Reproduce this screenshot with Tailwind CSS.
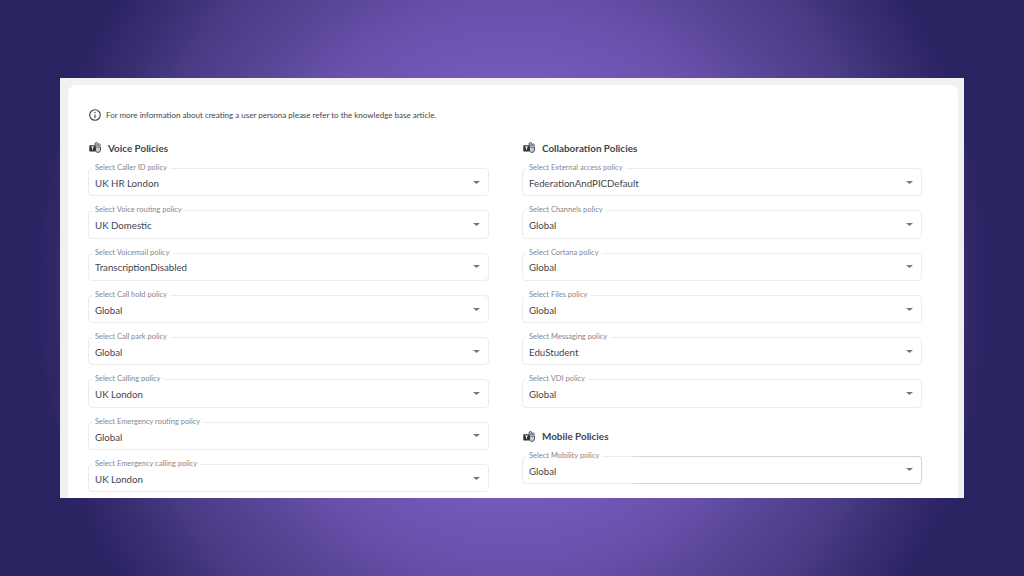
<!DOCTYPE html>
<html>
<head>
<meta charset="utf-8">
<script src="https://cdn.jsdelivr.net/npm/@tailwindcss/browser@4"></script>
</head>
<body class="m-0 overflow-hidden">
<div class="w-[1024px] h-[576px] pt-[78px] pl-[60px] font-['Lato','Noto_Sans',sans-serif] text-[#44444e] bg-[#2b2463] bg-[radial-gradient(ellipse_478px_516px_at_512px_288px,#7a5dc0_0%,#7559ba_40%,#6750aa_56%,#5a4799_65%,#4a3b85_80%,#3a2e72_90%,#2b2463_100%)]">
  <div class="w-[904px] h-[420px] bg-[#f1f1f1] pt-[7px] pl-2 pr-[6px] overflow-hidden">
    <div class="bg-white rounded-t-lg h-[420px] pl-5 pr-9 pt-[22px]">
      <div class="flex items-center gap-[5px] h-[16px] text-[8px] text-[#44444e]">
        <svg class="w-3 h-3 shrink-0 ml-px" viewBox="0 0 12 12" fill="none" stroke="#3c3c46" stroke-width="1.1"><circle cx="6" cy="6" r="5.3"/><path d="M6 5.4V9M6 3v1.2"/></svg>
        <span>For more information about creating a user persona please refer to the knowledge base article.</span>
      </div>
      <div class="grid grid-cols-[401px_400px] gap-x-[33px] mt-[17px]">
        <div>
          <h2 class="flex items-center gap-[7px] h-[16px] text-[9.9px] font-bold">
            <svg class="w-3 h-3 shrink-0 ml-px" viewBox="0 0 12 12"><circle cx="7.5" cy="2" r="1.5" fill="#c4c4c8" stroke="#4a4a54" stroke-width=".9"/><circle cx="10.4" cy="3" r="1.1" fill="#d4d4d8" stroke="#5c5c66" stroke-width=".8"/><path d="M6.4 5h5.1v3a2.6 2.6 0 0 1-2.6 2.5A2.7 2.7 0 0 1 6.4 8.4z" fill="#c8c8cc" stroke="#4a4a54" stroke-width=".9"/><rect x="0.3" y="3.2" width="6.4" height="6.2" rx=".6" fill="#2f2f38"/><path d="M1.9 4.9h3.2M3.5 4.9v3" stroke="#fff" stroke-width=".9"/></svg>
            Voice Policies
          </h2>
          <div class="flex flex-col gap-[14px] mt-[12px]">
            <div class="relative h-[28.3px] border border-[#ececee] rounded flex items-center justify-between pl-[6px] pr-2 text-[9.7px]"><span class="absolute -top-[6px] left-[3px] bg-white px-[3px] text-[7.5px] leading-[9px] text-[#85858f]">Select Caller ID policy</span><span class="pt-[2px]">UK HR London</span><svg class="w-[7px] h-[3px]" viewBox="0 0 7 3"><path d="M0 0h7L3.5 3z" fill="#75757e"/></svg></div>
            <div class="relative h-[28.3px] border border-[#ececee] rounded flex items-center justify-between pl-[6px] pr-2 text-[9.7px]"><span class="absolute -top-[6px] left-[3px] bg-white px-[3px] text-[7.5px] leading-[9px] text-[#85858f]">Select Voice routing policy</span><span class="pt-[2px]">UK Domestic</span><svg class="w-[7px] h-[3px]" viewBox="0 0 7 3"><path d="M0 0h7L3.5 3z" fill="#75757e"/></svg></div>
            <div class="relative h-[28.3px] border border-[#ececee] rounded flex items-center justify-between pl-[6px] pr-2 text-[9.7px]"><span class="absolute -top-[6px] left-[3px] bg-white px-[3px] text-[7.5px] leading-[9px] text-[#85858f]">Select Voicemail policy</span><span class="pt-[2px]">TranscriptionDisabled</span><svg class="w-[7px] h-[3px]" viewBox="0 0 7 3"><path d="M0 0h7L3.5 3z" fill="#75757e"/></svg></div>
            <div class="relative h-[28.3px] border border-[#ececee] rounded flex items-center justify-between pl-[6px] pr-2 text-[9.7px]"><span class="absolute -top-[6px] left-[3px] bg-white px-[3px] text-[7.5px] leading-[9px] text-[#85858f]">Select Call hold policy</span><span class="pt-[2px]">Global</span><svg class="w-[7px] h-[3px]" viewBox="0 0 7 3"><path d="M0 0h7L3.5 3z" fill="#75757e"/></svg></div>
            <div class="relative h-[28.3px] border border-[#ececee] rounded flex items-center justify-between pl-[6px] pr-2 text-[9.7px]"><span class="absolute -top-[6px] left-[3px] bg-white px-[3px] text-[7.5px] leading-[9px] text-[#85858f]">Select Call park policy</span><span class="pt-[2px]">Global</span><svg class="w-[7px] h-[3px]" viewBox="0 0 7 3"><path d="M0 0h7L3.5 3z" fill="#75757e"/></svg></div>
            <div class="relative h-[28.3px] border border-[#ececee] rounded flex items-center justify-between pl-[6px] pr-2 text-[9.7px]"><span class="absolute -top-[6px] left-[3px] bg-white px-[3px] text-[7.5px] leading-[9px] text-[#85858f]">Select Calling policy</span><span class="pt-[2px]">UK London</span><svg class="w-[7px] h-[3px]" viewBox="0 0 7 3"><path d="M0 0h7L3.5 3z" fill="#75757e"/></svg></div>
            <div class="relative h-[28.3px] border border-[#ececee] rounded flex items-center justify-between pl-[6px] pr-2 text-[9.7px]"><span class="absolute -top-[6px] left-[3px] bg-white px-[3px] text-[7.5px] leading-[9px] text-[#85858f]">Select Emergency routing policy</span><span class="pt-[2px]">Global</span><svg class="w-[7px] h-[3px]" viewBox="0 0 7 3"><path d="M0 0h7L3.5 3z" fill="#75757e"/></svg></div>
            <div class="relative h-[28.3px] border border-[#ececee] rounded flex items-center justify-between pl-[6px] pr-2 text-[9.7px]"><span class="absolute -top-[6px] left-[3px] bg-white px-[3px] text-[7.5px] leading-[9px] text-[#85858f]">Select Emergency calling policy</span><span class="pt-[2px]">UK London</span><svg class="w-[7px] h-[3px]" viewBox="0 0 7 3"><path d="M0 0h7L3.5 3z" fill="#75757e"/></svg></div>
          </div>
        </div>
        <div>
          <h2 class="flex items-center gap-[7px] h-[16px] text-[9.9px] font-bold">
            <svg class="w-3 h-3 shrink-0 ml-px" viewBox="0 0 12 12"><circle cx="7.5" cy="2" r="1.5" fill="#c4c4c8" stroke="#4a4a54" stroke-width=".9"/><circle cx="10.4" cy="3" r="1.1" fill="#d4d4d8" stroke="#5c5c66" stroke-width=".8"/><path d="M6.4 5h5.1v3a2.6 2.6 0 0 1-2.6 2.5A2.7 2.7 0 0 1 6.4 8.4z" fill="#c8c8cc" stroke="#4a4a54" stroke-width=".9"/><rect x="0.3" y="3.2" width="6.4" height="6.2" rx=".6" fill="#2f2f38"/><path d="M1.9 4.9h3.2M3.5 4.9v3" stroke="#fff" stroke-width=".9"/></svg>
            Collaboration Policies
          </h2>
          <div class="flex flex-col gap-[14px] mt-[12px]">
            <div class="relative h-[28.3px] border border-[#ececee] rounded flex items-center justify-between pl-[6px] pr-2 text-[9.7px]"><span class="absolute -top-[6px] left-[3px] bg-white px-[3px] text-[7.5px] leading-[9px] text-[#85858f]">Select External access policy</span><span class="pt-[2px]">FederationAndPICDefault</span><svg class="w-[7px] h-[3px]" viewBox="0 0 7 3"><path d="M0 0h7L3.5 3z" fill="#75757e"/></svg></div>
            <div class="relative h-[28.3px] border border-[#ececee] rounded flex items-center justify-between pl-[6px] pr-2 text-[9.7px]"><span class="absolute -top-[6px] left-[3px] bg-white px-[3px] text-[7.5px] leading-[9px] text-[#85858f]">Select Channels policy</span><span class="pt-[2px]">Global</span><svg class="w-[7px] h-[3px]" viewBox="0 0 7 3"><path d="M0 0h7L3.5 3z" fill="#75757e"/></svg></div>
            <div class="relative h-[28.3px] border border-[#ececee] rounded flex items-center justify-between pl-[6px] pr-2 text-[9.7px]"><span class="absolute -top-[6px] left-[3px] bg-white px-[3px] text-[7.5px] leading-[9px] text-[#85858f]">Select Cortana policy</span><span class="pt-[2px]">Global</span><svg class="w-[7px] h-[3px]" viewBox="0 0 7 3"><path d="M0 0h7L3.5 3z" fill="#75757e"/></svg></div>
            <div class="relative h-[28.3px] border border-[#ececee] rounded flex items-center justify-between pl-[6px] pr-2 text-[9.7px]"><span class="absolute -top-[6px] left-[3px] bg-white px-[3px] text-[7.5px] leading-[9px] text-[#85858f]">Select Files policy</span><span class="pt-[2px]">Global</span><svg class="w-[7px] h-[3px]" viewBox="0 0 7 3"><path d="M0 0h7L3.5 3z" fill="#75757e"/></svg></div>
            <div class="relative h-[28.3px] border border-[#ececee] rounded flex items-center justify-between pl-[6px] pr-2 text-[9.7px]"><span class="absolute -top-[6px] left-[3px] bg-white px-[3px] text-[7.5px] leading-[9px] text-[#85858f]">Select Messaging policy</span><span class="pt-[2px]">EduStudent</span><svg class="w-[7px] h-[3px]" viewBox="0 0 7 3"><path d="M0 0h7L3.5 3z" fill="#75757e"/></svg></div>
            <div class="relative h-[28.3px] border border-[#ececee] rounded flex items-center justify-between pl-[6px] pr-2 text-[9.7px]"><span class="absolute -top-[6px] left-[3px] bg-white px-[3px] text-[7.5px] leading-[9px] text-[#85858f]">Select VDI policy</span><span class="pt-[2px]">Global</span><svg class="w-[7px] h-[3px]" viewBox="0 0 7 3"><path d="M0 0h7L3.5 3z" fill="#75757e"/></svg></div>
          </div>
          <h2 class="flex items-center gap-[7px] h-[16px] mt-[21px] text-[9.9px] font-bold">
            <svg class="w-3 h-3 shrink-0 ml-px" viewBox="0 0 12 12"><circle cx="7.5" cy="2" r="1.5" fill="#c4c4c8" stroke="#4a4a54" stroke-width=".9"/><circle cx="10.4" cy="3" r="1.1" fill="#d4d4d8" stroke="#5c5c66" stroke-width=".8"/><path d="M6.4 5h5.1v3a2.6 2.6 0 0 1-2.6 2.5A2.7 2.7 0 0 1 6.4 8.4z" fill="#c8c8cc" stroke="#4a4a54" stroke-width=".9"/><rect x="0.3" y="3.2" width="6.4" height="6.2" rx=".6" fill="#2f2f38"/><path d="M1.9 4.9h3.2M3.5 4.9v3" stroke="#fff" stroke-width=".9"/></svg>
            Mobile Policies
          </h2>
          <div class="relative h-[28.3px] mt-[11px] border border-[#ececee] rounded flex items-center justify-between pl-[6px] pr-2 text-[9.7px]"><span class="absolute -top-px left-[110px] -bottom-px -right-px border border-l-0 border-[#d6d6da] rounded-r"></span><span class="absolute -top-[6px] left-[3px] bg-white px-[3px] text-[7.5px] leading-[9px] text-[#85858f]">Select Mobility policy</span><span class="pt-[2px]">Global</span><svg class="w-[7px] h-[3px]" viewBox="0 0 7 3"><path d="M0 0h7L3.5 3z" fill="#75757e"/></svg></div>
        </div>
      </div>
    </div>
  </div>
</div>
</body>
</html>
